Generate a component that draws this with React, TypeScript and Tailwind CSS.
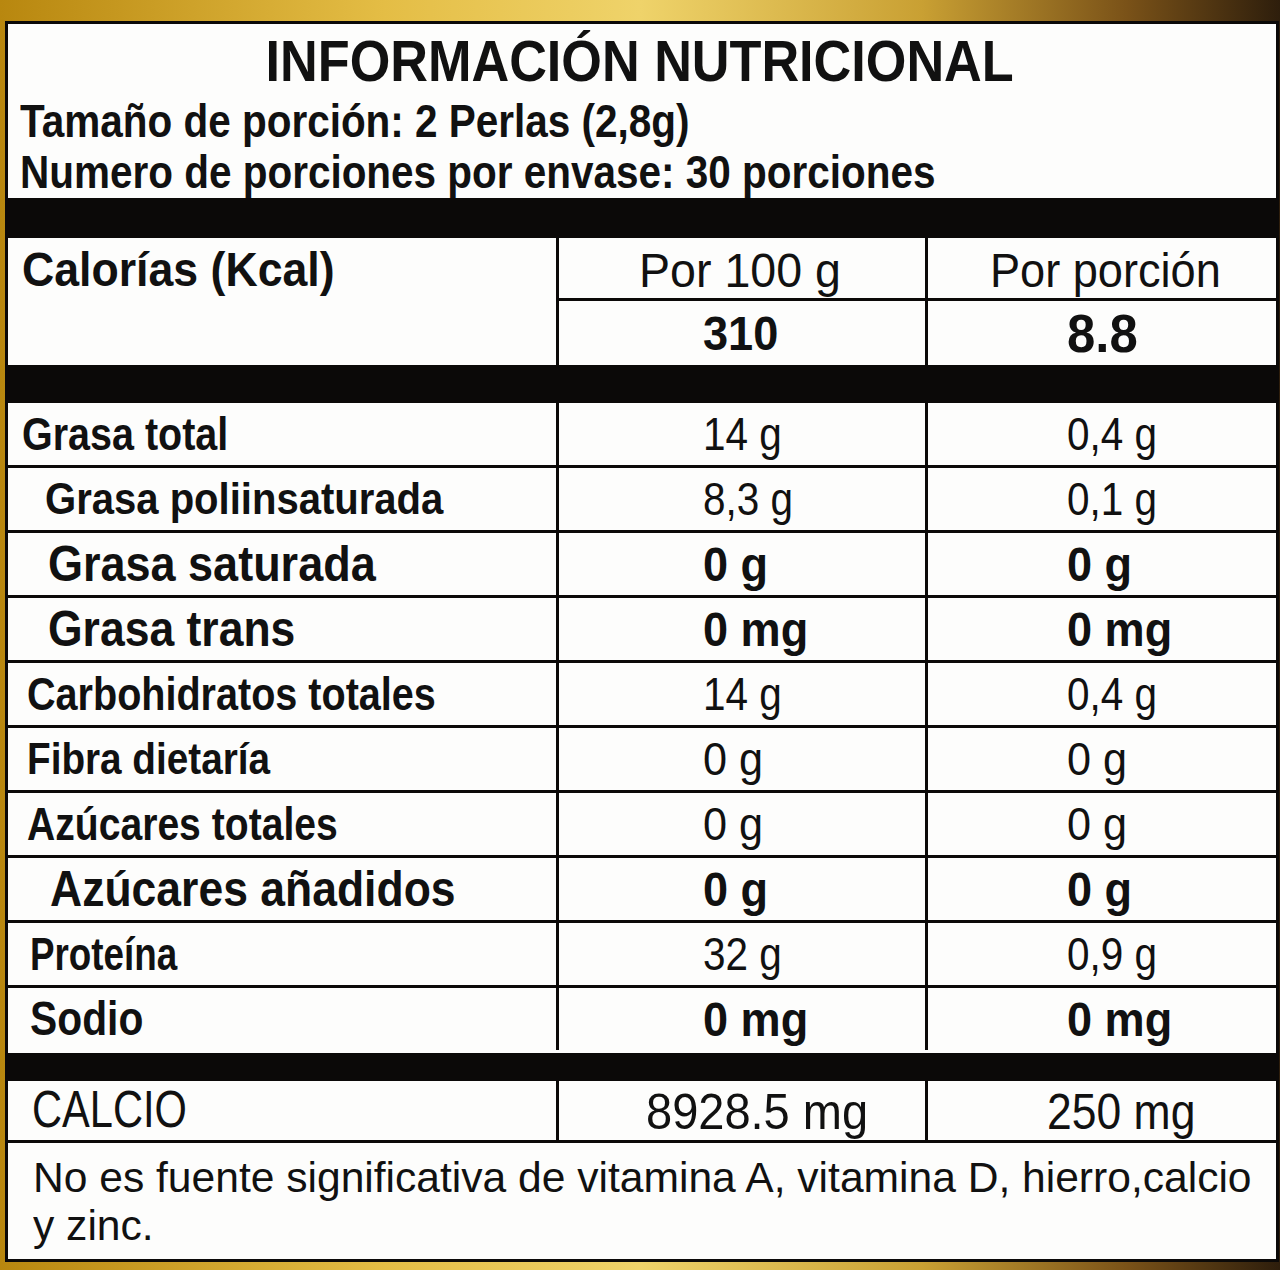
const rows = [
  { label: 'Grasa total', pad: 'pl-[14px]', lab: 'text-[47px] scale-x-[0.84]', val: 'text-[46px] scale-x-[0.88]', a: '14 g', b: '0,4 g' },
  { label: 'Grasa poliinsaturada', pad: 'pl-[37px]', lab: 'text-[44px] scale-x-[0.91]', val: 'text-[46px] scale-x-[0.88]', a: '8,3 g', b: '0,1 g' },
  { label: 'Grasa saturada', pad: 'pl-[40px]', lab: 'text-[50px] scale-x-[0.9]', val: 'text-[49px] scale-x-[0.92] font-bold', a: '0 g', b: '0 g' },
  { label: 'Grasa trans', pad: 'pl-[40px]', lab: 'text-[50px] scale-x-[0.89]', val: 'text-[49px] scale-x-[0.92] font-bold', a: '0 mg', b: '0 mg' },
  { label: 'Carbohidratos totales', pad: 'pl-[19px]', lab: 'text-[46px] scale-x-[0.86]', val: 'text-[46px] scale-x-[0.88]', a: '14 g', b: '0,4 g' },
  { label: 'Fibra dietaría', pad: 'pl-[19px]', lab: 'text-[45px] scale-x-[0.86]', val: 'text-[47px] scale-x-[0.92]', a: '0 g', b: '0 g' },
  { label: 'Azúcares totales', pad: 'pl-[19px]', lab: 'text-[46px] scale-x-[0.85]', val: 'text-[47px] scale-x-[0.92]', a: '0 g', b: '0 g' },
  { label: 'Azúcares añadidos', pad: 'pl-[42px]', lab: 'text-[50px] scale-x-[0.89]', val: 'text-[49px] scale-x-[0.92] font-bold', a: '0 g', b: '0 g' },
  { label: 'Proteína', pad: 'pl-[22px]', lab: 'text-[46px] scale-x-[0.8]', val: 'text-[46px] scale-x-[0.88]', a: '32 g', b: '0,9 g' },
  { label: 'Sodio', pad: 'pl-[22px]', lab: 'text-[48px] scale-x-[0.85]', val: 'text-[49px] scale-x-[0.92] font-bold', a: '0 mg', b: '0 mg' },
];

const line = 'border-[#0b0908]';

function Band({ h }: { h: string }) {
  return <div className={`${h} shrink-0 bg-[#0b0908]`} />;
}

export default function App() {
  return (
    <div className="h-[1270px] w-[1280px] overflow-hidden bg-[linear-gradient(90deg,#b8870f_0%,#e4bd45_30%,#efd36a_50%,#c9a033_72%,#7a5218_88%,#2e1e0c_100%)] pb-[8px] pl-[5px] pr-[1px] pt-[21px] font-['Liberation_Sans',Arial,sans-serif] text-[#111]">
      <div className={`flex h-full flex-col overflow-hidden border-[3px] ${line} bg-[#fdfdfc]`}>
        {/* encabezado */}
        <div className="h-[174px] shrink-0">
          <div className="flex justify-center pr-[4px] pt-[8px] leading-[58px]">
            <span className="inline-block origin-center scale-x-[0.9] whitespace-nowrap text-[58px] font-bold">
              INFORMACIÓN NUTRICIONAL
            </span>
          </div>
          <div className="mt-[6px] flex pl-[12px] leading-[51px]">
            <span className="inline-block origin-left scale-x-[0.88] whitespace-nowrap text-[46px] font-bold">
              Tamaño de porción: 2 Perlas (2,8g)
            </span>
          </div>
          <div className="flex pl-[12px] leading-[51px]">
            <span className="inline-block origin-left scale-x-[0.88] whitespace-nowrap text-[46px] font-bold">
              Numero de porciones por envase: 30 porciones
            </span>
          </div>
        </div>

        <Band h="h-[40px]" />

        {/* calorías */}
        <div className="grid h-[127px] shrink-0 grid-cols-[548px_369px_1fr]">
          <div className="flex pl-[14px] pt-[1px] leading-[62px]">
            <span className="inline-block h-fit origin-left scale-x-[0.93] whitespace-nowrap text-[48px] font-bold">
              Calorías (Kcal)
            </span>
          </div>
          <div className={`flex flex-col border-l-[3px] ${line}`}>
            <div className={`flex h-[63px] border-b-[3px] ${line} pl-[80px] pt-[5px] leading-[55px]`}>
              <span className="inline-block h-fit origin-left scale-x-[0.97] whitespace-nowrap text-[48px]">Por 100 g</span>
            </div>
            <div className="flex pl-[144px] pt-[2px] leading-[62px]">
              <span className="inline-block h-fit origin-left scale-x-[0.94] whitespace-nowrap text-[48px] font-bold">310</span>
            </div>
          </div>
          <div className={`flex flex-col border-l-[3px] ${line}`}>
            <div className={`flex h-[63px] border-b-[3px] ${line} pl-[62px] pt-[5px] leading-[55px]`}>
              <span className="inline-block h-fit origin-left scale-x-[0.94] whitespace-nowrap text-[48px]">Por porción</span>
            </div>
            <div className="flex pl-[139px] pt-[2px] leading-[62px]">
              <span className="inline-block h-fit origin-left scale-x-[0.96] whitespace-nowrap text-[53px] font-bold">8.8</span>
            </div>
          </div>
        </div>

        <Band h="h-[38px]" />

        {/* nutrientes */}
        <div className="flex shrink-0 flex-col">
          {rows.map((r, i) => (
            <div
              key={r.label}
              className={`grid h-[65px] grid-cols-[548px_369px_1fr] ${i < rows.length - 1 ? `border-b-[3px] ${line}` : 'pb-[3px]'}`}
            >
              <div className={`flex leading-[62px] ${r.pad}`}>
                <span className={`inline-block h-fit origin-left whitespace-nowrap font-bold ${r.lab}`}>{r.label}</span>
              </div>
              <div className={`flex border-l-[3px] ${line} pl-[144px] leading-[62px]`}>
                <span className={`inline-block h-fit origin-left whitespace-nowrap ${r.val}`}>{r.a}</span>
              </div>
              <div className={`flex border-l-[3px] ${line} pl-[139px] leading-[62px]`}>
                <span className={`inline-block h-fit origin-left whitespace-nowrap ${r.val}`}>{r.b}</span>
              </div>
            </div>
          ))}
        </div>

        <Band h="h-[28px]" />

        {/* calcio */}
        <div className={`grid h-[62px] shrink-0 grid-cols-[548px_369px_1fr] border-b-[3px] ${line}`}>
          <div className="flex pl-[24px] leading-[56px]">
            <span className="inline-block h-fit origin-left scale-x-[0.8] whitespace-nowrap text-[52px]">CALCIO</span>
          </div>
          <div className={`flex border-l-[3px] ${line} pl-[87px] pt-[4px] leading-[55px]`}>
            <span className="inline-block h-fit origin-left scale-x-[0.94] whitespace-nowrap text-[50px]">8928.5 mg</span>
          </div>
          <div className={`flex border-l-[3px] ${line} pl-[119px] pt-[4px] leading-[55px]`}>
            <span className="inline-block h-fit origin-left scale-x-[0.89] whitespace-nowrap text-[50px]">250 mg</span>
          </div>
        </div>

        {/* nota */}
        <div className="flex min-w-0 flex-1 overflow-hidden pl-[25px] pt-[10px] leading-[48px]">
          <p className="h-fit origin-left scale-x-[0.99] whitespace-nowrap text-[43px]">
            No es fuente significativa de vitamina A, vitamina D, hierro,calcio
            <br />y zinc.
          </p>
        </div>
      </div>
    </div>
  );
}
